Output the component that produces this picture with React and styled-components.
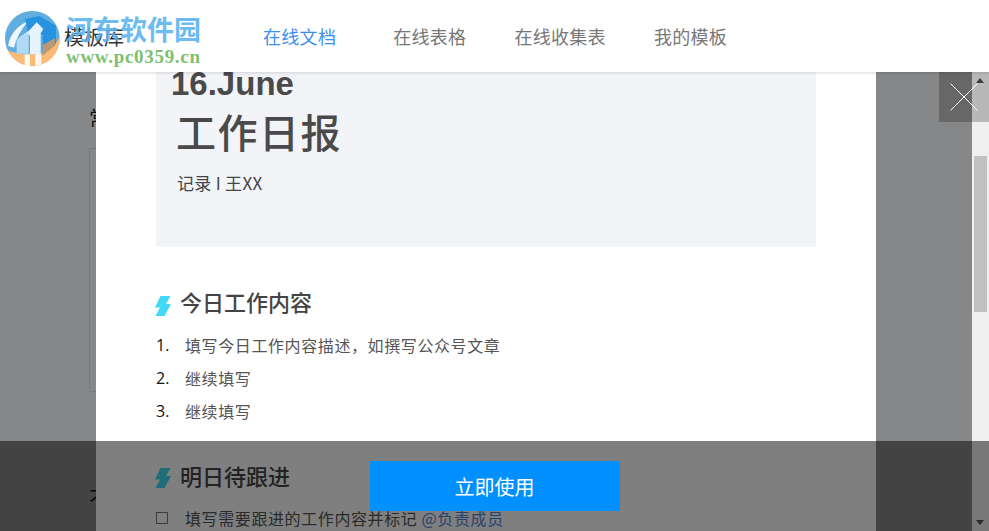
import React from 'react'
import styled, { createGlobalStyle } from 'styled-components';

const todayItems = ['填写今日工作内容描述，如撰写公众号文章', '继续填写', '继续填写'];
const navItems = ['在线文档', '在线表格', '在线收集表', '我的模板'];

function Bolt({ color }) {
    return (
        <svg width="16" height="20" viewBox="0 0 16 20">
            <path d="M5.500 0H15.500L11 8H16L9.500 20H.5L5 11.500H0z" fill={color} />
        </svg>
    )
}

function LogoMark() {
    return (
        <svg width="70" height="65" viewBox="0 0 210 195">
            <circle cx="97" cy="100" r="82" fill="#4ba3dc" />
            <path d="M22 135Q50 185 100 184Q175 175 181 92L165 120Q130 150 100 148Q55 150 22 135z" fill="#fbb265" />
            <path d="M24 122Q34 70 85 48Q52 85 42 128z" fill="#fff" opacity=".9" />
            <path d="M75 42L118 33L168 62V114L128 150V88L85 84z" fill="#0a84dc" />
            <path d="M52 102L86 78L110 52L130 72L122 85V148H90V90z" fill="#e4f2fc" />
            <path d="M50 104L86 82V146H50z" fill="#a6d4f5" />
            <path d="M128 120L165 100V122L128 152z" fill="#b08a60" />
            <path d="M74 148H90V184H74zM106 148H124V178L106 184z" fill="#fff" opacity=".9" />
        </svg>
    )
}

export default function App() {
    return (
        <Page>
            <GlobalStyle />
            <Header>
                <Brand>模板库</Brand>
                <Nav>
                    {navItems.map((item, i) => <NavItem key={item} active={i === 0}>{item}</NavItem>)}
                </Nav>
                <Watermark>
                    <LogoMark />
                    <WatermarkText>
                        <WatermarkName>河东软件园</WatermarkName>
                        <WatermarkUrl>www.pc0359.cn</WatermarkUrl>
                    </WatermarkText>
                </Watermark>
            </Header>
            <Body>
                <Gutter>
                    <GutterLabel>常</GutterLabel>
                    <GutterBox />
                    <GutterLabelLow>不</GutterLabelLow>
                </Gutter>
                <Modal>
                    <Cover>
                        <CoverDate>16.June</CoverDate>
                        <CoverTitle>工作日报</CoverTitle>
                        <CoverMeta>记录 I 王XX</CoverMeta>
                    </Cover>
                    <Heading>
                        <Bolt color="#41d9f5" />
                        <span>今日工作内容</span>
                    </Heading>
                    <List>
                        {todayItems.map((item, i) => (
                            <ListRow key={i}>
                                <Marker>{i + 1}.</Marker>
                                <span>{item}</span>
                            </ListRow>
                        ))}
                    </List>
                    <HeadingLow>
                        <Bolt color="#41d9f5" />
                        <span>明日待跟进</span>
                    </HeadingLow>
                    <CheckRow>
                        <Marker><CheckBox /></Marker>
                        <span>填写需要跟进的工作内容并标记 <Mention>@负责成员</Mention></span>
                    </CheckRow>
                </Modal>
                <RightGutter />
                <Scrollbar>
                    <ArrowUp />
                    <Thumb />
                    <ArrowDown />
                </Scrollbar>
                <CloseButton>
                    <svg width="50" height="50" viewBox="0 0 50 50">
                        <path d="M11.500 11.500l27 27M38.500 11.500l-27 27" stroke="#fff" strokeWidth="1" fill="none" />
                    </svg>
                </CloseButton>
                <ActionBar>
                    <UseButton>立即使用</UseButton>
                </ActionBar>
            </Body>
        </Page>
    )
}

const GlobalStyle = createGlobalStyle`
    html, body {
        margin:0;
        padding:0;
        overflow:hidden;
        background:#fff;
    }
`;

const cjk = `"Noto Sans CJK SC", "Liberation Sans", sans-serif`;

const Page = styled.div`
    width:989px;
    height:531px;
    overflow:hidden;
    display:flex;
    flex-direction:column;
    font-family:${cjk};
`;

const Header = styled.header`
    position:relative;
    height:72px;
    flex:none;
    display:flex;
    align-items:center;
    padding-left:64px;
    background:#fff;
    box-shadow:0 1px 3px rgba(0,0,0,.15);
    z-index:3;
`;

const Brand = styled.div`
    font-size:20px;
    color:#333;
    width:199px;
`;

const Nav = styled.nav`
    display:flex;
    gap:48px;
    & > :first-child {
        margin-right:9px;
    }
`;

const NavItem = styled.a`
    font-size:18px;
    letter-spacing:.3px;
    color:${props => props.active ? '#3c8ff0' : '#777'};
`;

const Watermark = styled.div`
    position:absolute;
    left:0;
    top:5px;
    display:flex;
    opacity:.88;
`;

const WatermarkText = styled.div`
    margin:5px 0 0 -4px;
    display:flex;
    flex-direction:column;
    font-family:"Noto Sans CJK SC", "Liberation Serif", serif;
    font-weight:700;
`;

const WatermarkName = styled.div`
    font-size:27px;
    line-height:38px;
    color:#5bb2f0;
    white-space:nowrap;
`;

const WatermarkUrl = styled.div`
    font-family:"Liberation Serif", serif;
    font-size:19px;
    line-height:18px;
    letter-spacing:.7px;
    color:#6cb85c;
`;

const Body = styled.div`
    position:relative;
    flex:1;
    display:flex;
    overflow:hidden;
    background:#868788;
`;

const Gutter = styled.div`
    width:96px;
    flex:none;
    padding:33px 0 0 89px;
    box-sizing:border-box;
    overflow:hidden;
    display:flex;
    flex-direction:column;
`;

const GutterLabel = styled.div`
    font-size:20px;
    line-height:26px;
    color:#111;
    white-space:nowrap;
`;

const GutterBox = styled.div`
    margin-top:17px;
    width:40px;
    height:244px;
    flex:none;
    border:1px solid #7a7b7c;
    box-sizing:border-box;
`;

const GutterLabelLow = styled(GutterLabel)`
    margin-top:93px;
`;

const Modal = styled.div`
    width:780px;
    flex:none;
    background:#fff;
    padding:0 60px;
    box-sizing:border-box;
    overflow:hidden;
`;

const Cover = styled.div`
    height:175px;
    background:#f3f4f8;
    padding:0 0 0 15px;
    box-sizing:border-box;
    color:#444;
`;

const CoverDate = styled.div`
    font-family:"Liberation Sans", sans-serif;
    font-weight:700;
    font-size:33px;
    line-height:24px;
    color:#4a4a4a;
`;

const CoverTitle = styled.div`
    margin:6px 0 0 5px;
    font-size:40px;
    font-weight:500;
    line-height:58px;
    letter-spacing:1.5px;
    color:#4a4a4a;
`;

const CoverMeta = styled.div`
    margin:11px 0 0 6px;
    font-size:17px;
    line-height:24px;
    letter-spacing:.3px;
    color:#444;
`;

const Heading = styled.div`
    display:flex;
    align-items:center;
    gap:8px;
    margin-top:41px;
    height:32px;
    font-size:22px;
    font-weight:500;
    color:#444;
    & > svg {
        margin-left:1px;
        margin-top:3px;
        transform:translateX(-2px);
    }
    & > span {
        margin-top:-6px;
        margin-left:-1px;
    }
`;

const HeadingLow = styled(Heading)`
    margin-top:33px;
    & > span {
        margin-top:-2px;
    }
`;

const List = styled.div`
    margin-top:8px;
`;

const ListRow = styled.div`
    display:flex;
    align-items:center;
    height:33px;
    font-size:16px;
    letter-spacing:.6px;
    color:#555;
`;

const CheckRow = styled(ListRow)`
    margin-top:9px;
`;

const Marker = styled.span`
    width:29px;
    flex:none;
    color:#111;
    letter-spacing:0;
    font-family:"Open Sans", sans-serif;
    font-size:16px;
`;

const CheckBox = styled.span`
    display:block;
    width:10px;
    height:10px;
    border:1px solid #777;
`;

const Mention = styled.span`
    color:#4f86d8;
`;

const RightGutter = styled.div`
    flex:1;
`;

const Scrollbar = styled.div`
    width:17px;
    flex:none;
    background:#f0f0f0;
    position:relative;
`;

const ArrowUp = styled.div`
    position:absolute;
    top:6px;
    left:4px;
    border:4px solid transparent;
    border-top:0;
    border-bottom:5px solid #505050;
`;

const ArrowDown = styled.div`
    position:absolute;
    bottom:6px;
    left:4px;
    border:4px solid transparent;
    border-bottom:0;
    border-top:5px solid #505050;
`;

const Thumb = styled.div`
    position:absolute;
    top:84px;
    left:2px;
    width:13px;
    height:156px;
    background:#c1c1c1;
`;

const CloseButton = styled.div`
    position:absolute;
    top:0;
    right:0;
    width:50px;
    height:50px;
    background:rgba(0,0,0,.23);
    line-height:0;
`;

const ActionBar = styled.div`
    position:absolute;
    left:0;
    right:0;
    bottom:0;
    height:90px;
    background:rgba(0,0,0,.5);
    display:flex;
    justify-content:center;
    padding-top:20px;
    box-sizing:border-box;
`;

const UseButton = styled.button`
    width:250px;
    height:50px;
    border:0;
    border-radius:2px;
    background:#0090ff;
    color:#fff;
    font-family:${cjk};
    font-size:20px;
`;
